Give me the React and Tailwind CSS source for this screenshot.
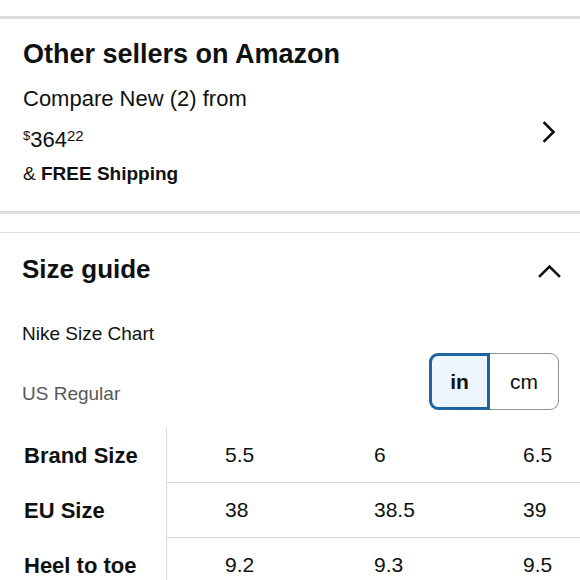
import React from "react";

const FONT = { fontFamily: '"Liberation Sans", Arial, Helvetica, sans-serif' };

const rows = [
  { label: "Brand Size", values: ["5.5", "6", "6.5"] },
  { label: "EU Size", values: ["38", "38.5", "39"] },
  { label: "Heel to toe", values: ["9.2", "9.3", "9.5"] },
];

function ChevronRight() {
  return (
    <svg width="14" height="22" viewBox="0 0 14 22" fill="none" aria-hidden="true">
      <polyline points="2.5,2 11.5,11 2.5,20" stroke="#0f1111" strokeWidth="2.6" strokeLinecap="square" />
    </svg>
  );
}

function ChevronUp() {
  return (
    <svg width="23" height="14" viewBox="0 0 23 14" fill="none" aria-hidden="true">
      <polyline points="2,12 11.5,2.5 21,12" stroke="#0f1111" strokeWidth="2.6" strokeLinecap="square" />
    </svg>
  );
}

export default function App() {
  return (
    <div className="h-[580px] w-[580px] overflow-hidden bg-white text-[#0f1111]" style={FONT}>
      <div className="h-[16px]" />
      <div className="h-[3px] bg-[#dddddd]" />

      {/* Other sellers */}
      <div className="flex justify-between pl-[23px] pr-[24px] pt-[20px] pb-[25px]">
        <div className="flex flex-col">
          <div className="text-[27px] font-bold leading-[30px]">Other sellers on Amazon</div>
          <div className="mt-[17px] text-[22px] leading-[26px]">Compare New (2) from</div>
          <div className="mt-[15px] flex items-start leading-[26px]">
            <span className="mt-[1px] text-[13px] leading-[16px]">$</span>
            <span className="text-[22px]">364</span>
            <span className="mt-[1px] text-[15px] leading-[16px]">22</span>
          </div>
          <div className="mt-[9px] text-[19px] leading-[24px]">
            & <span className="font-bold">FREE Shipping</span>
          </div>
        </div>
        <div className="pt-[82px]">
          <ChevronRight />
        </div>
      </div>

      <div className="h-[3px] bg-[#dddddd]" />
      <div className="h-[18px]" />
      <div className="h-px bg-[#dedede]" />

      {/* Size guide */}
      <div className="flex items-start justify-between pl-[22px] pr-[19px] pt-[21px]">
        <div className="text-[26px] font-bold leading-[30px]">Size guide</div>
        <div className="pt-[10px]">
          <ChevronUp />
        </div>
      </div>

      <div className="flex items-start justify-between pl-[22px] pr-[21px] pt-[38px]">
        <div className="flex flex-col">
          <div className="text-[19px] leading-[24px]">Nike Size Chart</div>
          <div className="mt-[36px] text-[19px] leading-[24px] text-[#565959]">US Regular</div>
        </div>
        <div className="mt-[31px] flex h-[57px]">
          <div className="flex w-[61px] items-center justify-center rounded-l-[9px] border-[3px] border-[#2162a1] bg-[#edf6fe] text-[21px] font-bold">
            in
          </div>
          <div className="flex w-[69px] items-center justify-center rounded-r-[9px] border border-l-0 border-[#8d9090] text-[21px]">
            cm
          </div>
        </div>
      </div>

      {/* Table */}
      <div className="mt-[18px] flex flex-col">
        {rows.map((row) => (
          <div key={row.label} className="flex h-[55px]">
            <div className="flex w-[167px] shrink-0 items-center border-r border-[#d5d9d9] pl-[24px] text-[22px] font-bold">
              {row.label}
            </div>
            <div className="flex flex-1 border-b border-[#d5d9d9]">
              {row.values.map((v, i) => (
                <div key={i} className="flex w-[149px] shrink-0 items-center pl-[58px] text-[21px]">
                  {v}
                </div>
              ))}
            </div>
          </div>
        ))}
      </div>
    </div>
  );
}
